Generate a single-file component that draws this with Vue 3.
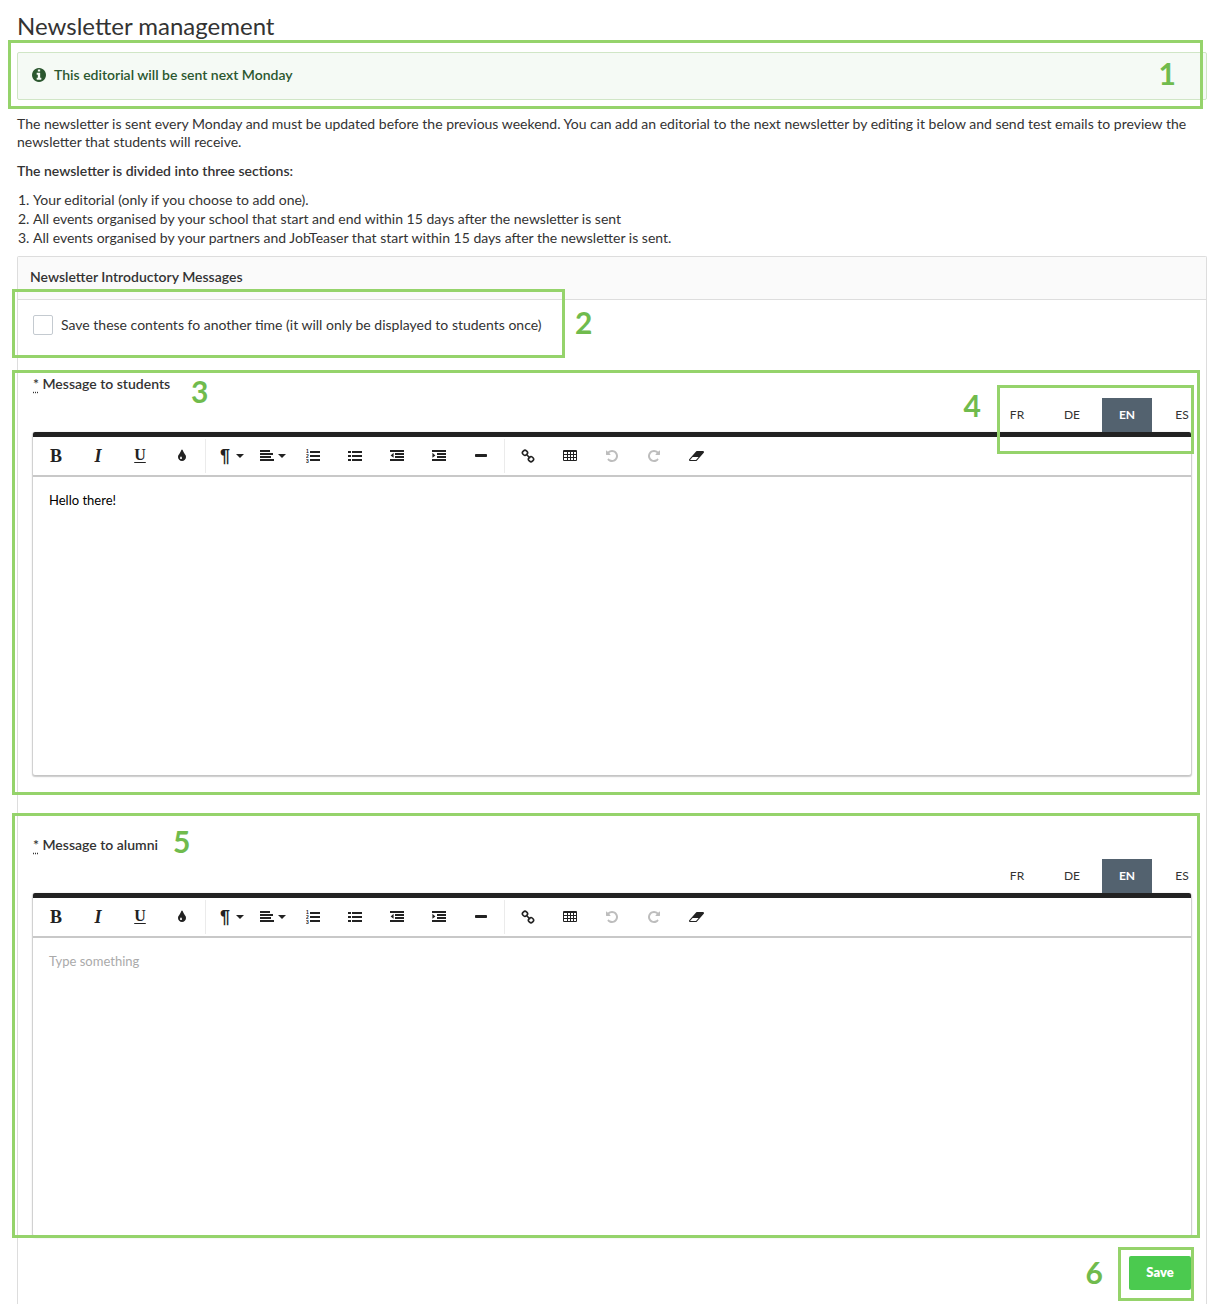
<template>
  <main class="page">
    <h1 class="title">Newsletter management</h1>

    <div class="alert" role="status">
      <svg class="alert-icon" viewBox="128 128 1536 1536" aria-hidden="true">
        <path d="M1152 1376v-160q0-14-9-23t-23-9h-96v-512q0-14-9-23t-23-9h-320q-14 0-23 9t-9 23v160q0 14 9 23t23 9h96v320h-96q-14 0-23 9t-9 23v160q0 14 9 23t23 9h448q14 0 23-9t9-23zm-128-896v-160q0-14-9-23t-23-9h-192q-14 0-23 9t-9 23v160q0 14 9 23t23 9h192q14 0 23-9t9-23zm640 416q0 209-103 385.5t-279.5 279.5-385.5 103-385.5-103-279.5-279.5-103-385.5 103-385.5 279.5-279.5 385.5-103 385.5 103 279.5 279.5 103 385.5z" />
      </svg>
      <span>This editorial will be sent next Monday</span>
      <span class="mark mark-alert"></span>
      <span class="step step-alert">1</span>
    </div>

    <p class="intro">
      The newsletter is sent every Monday and must be updated before the previous weekend. You can add an editorial to
      the next newsletter by editing it below and send test emails to preview the newsletter that students will receive.
    </p>
    <p class="subtitle">The newsletter is divided into three sections:</p>
    <ol class="sections">
      <li v-for="item in sections" :key="item">{{ item }}</li>
    </ol>

    <form class="panel" @submit.prevent>
      <h2 class="panel-header">Newsletter Introductory Messages</h2>
      <div class="panel-body">
        <div class="once">
          <input id="once" v-model="once" type="checkbox" class="checkbox" />
          <label for="once">Save these contents fo another time (it will only be displayed to students once)</label>
          <span class="mark mark-once"></span>
          <span class="step step-once">2</span>
        </div>

        <div v-for="field in fields" :key="field.id" class="field">
          <label :for="field.id" class="field-label"><abbr title="required">*</abbr> {{ field.label }}</label>
          <div class="tabs">
            <button v-for="lang in langs" :key="lang" type="button" class="tab" :class="{ active: field.lang === lang }"
              @click="field.lang = lang">{{ lang }}</button>
          </div>

          <div class="editor">
            <div class="toolbar">
              <template v-for="tool in tools" :key="tool.name">
                <span v-if="tool.name.startsWith('sep')" class="separator"></span>
                <button v-else type="button" class="tool" :class="{ dropdown: tool.dropdown }" :disabled="tool.disabled"
                  :aria-label="tool.name">
                  <span v-if="tool.glyph" class="glyph" :class="tool.name">{{ tool.glyph }}</span>
                  <svg v-else-if="tool.name === 'numbered'" class="icon" viewBox="0 0 14 14">
                    <path :d="tool.path" />
                    <text x="0" y="4">1</text>
                    <text x="0" y="9">2</text>
                    <text x="0" y="14">3</text>
                  </svg>
                  <svg v-else-if="tool.name === 'link'" class="icon stroked" viewBox="0 0 14 14">
                    <rect x="1.6" y="1.4" width="4.8" height="4.8" rx="2" transform="rotate(45 4 3.8)" />
                    <rect x="7.6" y="7.8" width="4.8" height="4.8" rx="2" transform="rotate(45 10 10.2)" />
                    <path d="M5 5l4.2 4.2" />
                  </svg>
                  <svg v-else class="icon" :class="tool.name" :viewBox="tool.box || '0 0 14 14'">
                    <path :d="tool.path" fill-rule="evenodd" />
                  </svg>
                  <span v-if="tool.dropdown" class="caret"></span>
                </button>
              </template>
            </div>
            <textarea :id="field.id" v-model="field.text" class="content" placeholder="Type something"></textarea>
          </div>

          <span class="mark" :class="'mark-' + field.id"></span>
          <span class="step" :class="'step-' + field.id">{{ field.step }}</span>
          <template v-if="field.id === 'students'">
            <span class="mark mark-tabs"></span>
            <span class="step step-tabs">4</span>
          </template>
        </div>

        <div class="actions">
          <div class="save-wrap">
            <button type="submit" class="save">Save</button>
            <span class="mark mark-save"></span>
            <span class="step step-save">6</span>
          </div>
        </div>
      </div>
    </form>
  </main>
</template>

<script setup>
import { ref, reactive } from 'vue'

const once = ref(false)
const langs = ['FR', 'DE', 'EN', 'ES']

const sections = [
  'Your editorial (only if you choose to add one).',
  'All events organised by your school that start and end within 15 days after the newsletter is sent',
  'All events organised by your partners and JobTeaser that start within 15 days after the newsletter is sent.'
]

const fields = reactive([
  { id: 'students', label: 'Message to students', lang: 'EN', text: 'Hello there!', step: 3 },
  { id: 'alumni', label: 'Message to alumni', lang: 'EN', text: '', step: 5 }
])

const undoPath = 'M1664 896q0 156-61 298t-164 245-245 164-298 61q-172 0-327-72.5t-264-204.5q-7-10-6.5-22.5t8.5-20.5l137-138q10-9 25-9 16 2 23 12 73 95 179 147t225 52q104 0 198.5-40.5t163.5-109.5 109.5-163.5 40.5-198.5-40.5-198.5-109.5-163.5-163.5-109.5-198.5-40.5q-98 0-188 35.5t-160 101.5l137 138q31 30 14 69-17 40-59 40h-448q-26 0-45-19t-19-45v-448q0-42 40-59 39-17 69 14l130 129q107-101 244.5-156.5t284.5-55.5q156 0 298 61t245 164 164 245 61 298z'

const tools = [
  { name: 'bold', glyph: 'B' },
  { name: 'italic', glyph: 'I' },
  { name: 'underline', glyph: 'U' },
  {
    name: 'color',
    box: '0 0 1792 1792',
    path: 'M896 1152q0-36-20-69-1-1-15.5-22.5t-25.5-38-25-44-21-50.5q-4-16-21-16t-21 16q-7 23-21 50.5t-25 44-25.5 38-15.5 22.5q-20 33-20 69 0 53 37.5 90.5t90.5 37.5 90.5-37.5 37.5-90.5zm512-128q0 212-150 362t-362 150-362-150-150-362q0-145 81-275 6-9 62.5-90.5t101-151 99.5-178 83-201.5q9-30 34-47t51-17 51.5 17 33.5 47q28 93 83 201.5t99.5 178 101 151 62.5 90.5q81 127 81 275z'
  },
  { name: 'sep-1' },
  { name: 'paragraph', glyph: '¶', dropdown: true },
  { name: 'align', dropdown: true, path: 'M0 1h10v2H0zM0 4h13v2H0zM0 7h11v2H0zM0 10h14v2H0z' },
  { name: 'numbered', path: 'M4 2h10v2H4zM4 6h10v2H4zM4 10h10v2H4z' },
  { name: 'bullets', path: 'M4 2h10v2H4zM4 6h10v2H4zM4 10h10v2H4zM0 2h3v2H0zM0 6h3v2H0zM0 10h3v2H0z' },
  { name: 'outdent', path: 'M0 1h14v2H0zM5 4h9v2H5zM5 7h9v2H5zM0 10h14v2H0zM3.6 3.8v5L.6 6.4z' },
  { name: 'indent', path: 'M0 1h14v2H0zM5 4h9v2H5zM5 7h9v2H5zM0 10h14v2H0zM.4 3.8v5l3-2.4z' },
  { name: 'rule', path: 'M1.8 5h10.4q.8 0 .8.8v1.400q0 .8-.8.8H1.8q-.8 0-.8-.8V5.800q0-.8.8-.8z' },
  { name: 'sep-2' },
  { name: 'link' },
  { name: 'table', path: 'M1 1h12q1 0 1 1v9q0 1-1 1H1q-1 0-1-1V2q0-1 1-1zM1 3v2h3V3zM5 3v2h2V3zM8 3v2h2V3zM11 3v2h2V3zM1 6v2h3V6zM5 6v2h2V6zM8 6v2h2V6zM11 6v2h2V6zM1 9v2h3V9zM5 9v2h2V9zM8 9v2h2V9zM11 9v2h2V9z' },
  { name: 'undo', box: '0 0 1792 1792', path: undoPath, disabled: true },
  { name: 'redo', box: '0 0 1792 1792', path: undoPath, disabled: true },
  {
    name: 'clear',
    box: '0 0 1920 1792',
    path: 'M896 1408l336-384h-768l-336 384h768zm1013-1077q15 34 9.5 71.5t-30.5 65.5l-896 1024q-38 44-96 44h-768q-38 0-69.5-20.5t-47.5-54.5q-15-34-9.5-71.5t30.5-65.5l896-1024q38-44 96-44h768q38 0 69.5 20.5t47.5 54.5z'
  }
]
</script>

<style>
body {
  background: #fff;
}
</style>

<style scoped>
.page {
  box-sizing: border-box;
  display: flex;
  flex-direction: column;
  min-height: 100vh;
  padding: 10px 1px 0 17px;
  overflow: hidden;
  color: #333;
  font-family: Lato, "Open Sans", sans-serif;
  font-size: 14px;
  line-height: 18px;
}

button,
input,
textarea {
  margin: 0;
  font-family: inherit;
}

.title {
  margin: 0 0 10px;
  font-size: 24px;
  font-weight: 400;
  line-height: 32px;
}

.alert {
  position: relative;
  display: flex;
  align-items: center;
  gap: 8px;
  padding: 13px 14px 15px;
  border: 1px solid #d0e6c6;
  border-radius: 2px;
  background: #f5faf5;
  color: #2b572f;
  font-weight: 600;
}

.alert-icon {
  width: 14px;
  height: 14px;
  fill: currentColor;
}

.intro {
  margin: 15px 0 11px;
}

.subtitle {
  margin: 0 0 10px;
  font-weight: 600;
}

.sections {
  margin: 0 0 9px;
  padding-left: 16px;
  line-height: 19px;
}

.panel {
  flex: 1;
  border: 1px solid #ddd;
  border-bottom: 0;
  border-radius: 2px 2px 0 0;
}

.panel-header {
  margin: 0;
  padding: 11px 12px 13px;
  border-bottom: 1px solid #ddd;
  background: #fafafa;
  font-size: 14px;
  font-weight: 600;
  line-height: 18px;
}

.panel-body {
  padding: 15px 15px 0;
}

.once {
  position: relative;
  display: flex;
  align-items: center;
  gap: 8px;
  margin-bottom: 40px;
}

.checkbox {
  width: 20px;
  height: 20px;
  border: 1px solid #c4cad0;
  border-radius: 2px;
  background: #fff;
  appearance: none;
}

.checkbox:checked {
  background: #4bca4f;
}

.field {
  position: relative;
  margin-bottom: 61px;
}

.field:nth-of-type(3) {
  margin-bottom: 20px;
}

.field-label {
  display: block;
  font-weight: 600;
}

.field-label abbr {
  text-decoration: underline dotted;
  text-underline-offset: 3px;
}

.tabs {
  display: flex;
  justify-content: flex-end;
  gap: 5px;
  margin: 5px -16px 0 0;
}

.tab {
  width: 50px;
  height: 34px;
  padding: 0 0 2px;
  border: 0;
  background: transparent;
  color: #333;
  font-size: 12px;
}

.tab.active {
  background: #53626f;
  color: #fff;
  font-weight: 700;
}

.editor {
  border-top: 5px solid #222;
  border-radius: 2px;
  box-shadow: 0 1px 3px rgba(0, 0, 0, .12), 0 1px 1px 1px rgba(0, 0, 0, .16);
}

.toolbar {
  display: flex;
  align-items: center;
  padding: 0 2px;
  border-bottom: 2px solid #c8c8c8;
}

.tool {
  display: flex;
  align-items: center;
  justify-content: center;
  width: 38px;
  height: 38px;
  margin: 0 2px;
  padding: 0;
  border: 0;
  background: transparent;
  color: #222;
}

.tool.dropdown {
  gap: 4px;
  padding-left: 4px;
}

.tool:disabled {
  color: #bdbdbd;
}

.icon {
  width: 14px;
  height: 14px;
  fill: currentColor;
}

.icon.stroked {
  fill: none;
  stroke: currentColor;
  stroke-width: 1.6;
}

.icon text {
  font-family: "Liberation Sans", sans-serif;
  font-size: 5px;
  font-weight: 700;
}

.icon.redo {
  transform: scaleX(-1);
}

.icon.clear {
  width: 15px;
}

.glyph {
  font-family: "Liberation Serif", serif;
  font-size: 18px;
  font-weight: 700;
  line-height: 18px;
}

.glyph.italic {
  font-style: italic;
}

.glyph.underline {
  padding-bottom: 2px;
  font-size: 16px;
  text-decoration: underline;
  text-underline-offset: 2px;
}

.glyph.paragraph {
  width: 14px;
  font-family: "Liberation Sans", sans-serif;
}

.caret {
  border: 4px solid transparent;
  border-top-color: currentColor;
  border-bottom: 0;
}

.separator {
  width: 1px;
  height: 34px;
  margin: 0 2px;
  background: #ebebeb;
}

.content {
  box-sizing: border-box;
  display: block;
  width: 100%;
  height: 298px;
  padding: 14px 16px;
  border: 0;
  outline: 0;
  background: transparent;
  color: #000;
  font-size: 13px;
  line-height: 18px;
  resize: none;
}

.content::placeholder {
  color: #aaa;
}

.actions {
  display: flex;
  justify-content: flex-end;
  padding-bottom: 14px;
}

.save-wrap {
  position: relative;
}

.save {
  display: block;
  width: 62px;
  height: 34px;
  padding: 0 0 2px;
  border: 0;
  border-radius: 2px;
  background: #4bca4f;
  color: #fff;
  font-size: 13px;
  font-weight: 800;
}

/* numbered guide frames drawn over the form */
.mark {
  position: absolute;
  border: 3px solid #95d36b;
  pointer-events: none;
}

.step {
  position: absolute;
  color: #70bb4d;
  font-size: 30px;
  font-weight: 700;
  line-height: 36px;
}

.mark-alert {
  inset: -13px 3px -10px -10px;
}

.step-alert {
  top: 2px;
  right: 30px;
}

.mark-once {
  top: -26px;
  bottom: -23px;
  left: -21px;
  width: 547px;
}

.step-once {
  top: -11px;
  left: 542px;
}

.mark-students {
  inset: -5px -9px -20px -21px;
}

.step-students {
  top: -2px;
  left: 158px;
}

.mark-alumni {
  inset: -23px -9px -2px -21px;
}

.step-alumni {
  top: -13px;
  left: 140px;
}

.mark-tabs {
  top: 10px;
  right: -3px;
  width: 191px;
  height: 63px;
}

.step-tabs {
  top: 12px;
  right: 210px;
}

.mark-save {
  inset: -9px -3px -11px -11px;
}

.step-save {
  top: -2px;
  right: 88px;
}
</style>
